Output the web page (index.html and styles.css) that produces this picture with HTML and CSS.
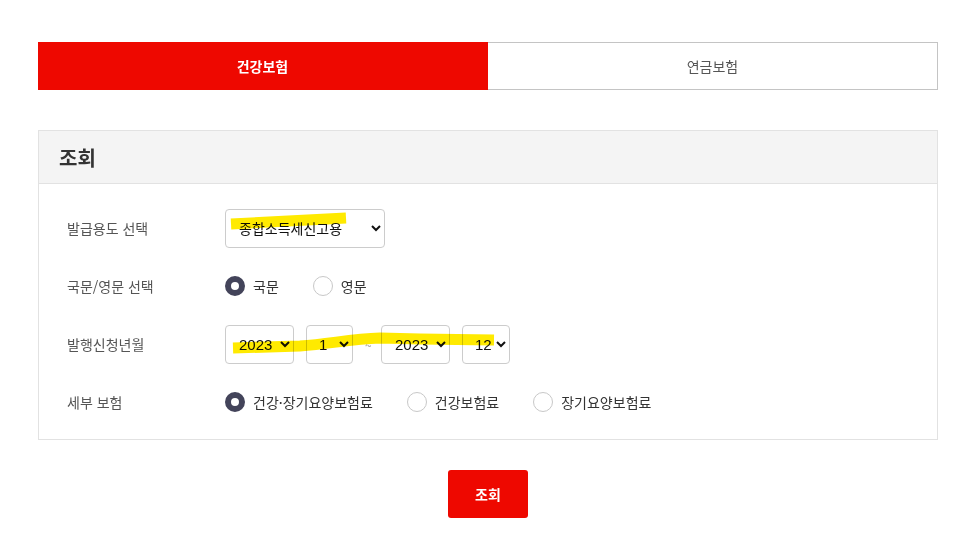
FILE: index.html
```html
<!DOCTYPE html>
<html lang="ko">
<head>
  <meta charset="UTF-8" />
  <meta name="viewport" content="width=device-width, initial-scale=1.0" />
  <title>보험료 납부확인서</title>
  <link rel="stylesheet" href="styles.css">
</head>
<body>

  <div class="wrap">
    <div class="tabs">
      <div class="tab active">건강보험</div>
      <div class="tab">연금보험</div>
    </div>

    <div class="panel">
      <div class="panel-head">조회</div>
      <div class="panel-body">
        <div class="row">
          <div class="label">발급용도 선택</div>
          <select class="sel sel-wide">
            <option>종합소득세신고용</option>
          </select>
        </div>

        <div class="row">
          <div class="label">국문/영문 선택</div>
          <div class="radios">
            <label class="radio"><span class="dot on"></span>국문</label>
            <label class="radio"><span class="dot"></span>영문</label>
          </div>
        </div>

        <div class="row">
          <div class="label">발행신청년월</div>
          <div class="dates">
            <select class="sel sel-year"><option>2023</option></select>
            <select class="sel sel-month"><option>1</option></select>
            <span class="tilde">~</span>
            <select class="sel sel-year"><option>2023</option></select>
            <select class="sel sel-month2"><option>12</option></select>
          </div>
        </div>

        <div class="row">
          <div class="label">세부 보험</div>
          <div class="radios">
            <label class="radio"><span class="dot on"></span>건강·장기요양보험료</label>
            <label class="radio"><span class="dot"></span>건강보험료</label>
            <label class="radio"><span class="dot"></span>장기요양보험료</label>
          </div>
        </div>
      </div>
    </div>

    <div class="actions">
      <button class="btn">조회</button>
    </div>
  </div>

  <!-- highlighter marks drawn over the page -->
  <svg class="marks" width="955" height="536" viewBox="0 0 955 536">
    <path d="M231 224 L346 218" />
    <path d="M233 348 L300 346 C330 344 350 339 380 338 L420 339 L494 340" />
  </svg>

</body>
</html>
```

FILE: styles.css
```css
* { margin: 0; padding: 0; box-sizing: border-box; }
body {
  font-family: "Noto Sans CJK KR", "Noto Sans", sans-serif;
  background: #fff;
  color: #333;
  font-size: 14px;
}
.wrap {
  width: 900px;
  margin-left: 38px;
  padding-top: 42px;
}
.tabs {
  display: flex;
  height: 48px;
}
.tab {
  flex: 1;
  display: flex;
  align-items: center;
  justify-content: center;
  border: 1px solid #c4c4c4;
  border-left: none;
  color: #555;
  font-size: 14px;
}
.tab.active {
  background: #ee0800;
  border-color: #ee0800;
  color: #fff;
  font-weight: bold;
}
.panel {
  margin-top: 40px;
  border: 1px solid #e2e2e2;
}
.panel-head {
  background: #f4f4f4;
  border-bottom: 1px solid #e2e2e2;
  height: 53px;
  padding-left: 20px;
  display: flex;
  align-items: center;
  font-size: 20px;
  font-weight: bold;
  color: #333;
}
.panel-body {
  padding: 24px 28px 17px;
  display: flex;
  flex-direction: column;
  gap: 18px;
}
.row {
  display: flex;
  align-items: center;
  height: 40px;
}
.label {
  width: 158px;
  color: #555;
  font-size: 14px;
}
.sel {
  height: 39px;
  border: 1px solid #ccc;
  border-radius: 4px;
  background: #fff;
  font-family: "Liberation Sans", "Noto Sans CJK KR", sans-serif;
  font-size: 15px;
  color: #111;
  padding: 0 2px 0 9px;
}
.sel-wide {
  width: 160px;
  font-family: "Noto Sans CJK KR", sans-serif;
  font-size: 14px;
}
.sel-year { width: 69px; }
.sel-month { width: 47px; padding-left: 8px; }
.sel-month2 { width: 48px; padding-left: 8px; }
.dates {
  display: flex;
  align-items: center;
  gap: 12px;
}
.tilde {
  color: #999;
  width: 4px;
  font-size: 12px;
}
.radios {
  display: flex;
  align-items: center;
  gap: 34px;
}
.radio {
  display: flex;
  align-items: center;
  gap: 8px;
  color: #333;
  font-size: 14px;
}
.dot {
  width: 20px;
  height: 20px;
  border-radius: 50%;
  border: 1px solid #c8c8c8;
  background: #fff;
}
.dot.on {
  border: 6px solid #43445a;
}
.actions {
  display: flex;
  justify-content: center;
  padding-top: 30px;
}
.btn {
  width: 80px;
  height: 48px;
  border: none;
  border-radius: 3px;
  background: #ee0800;
  color: #fff;
  font-family: inherit;
  font-size: 14px;
  font-weight: bold;
}
.marks {
  position: absolute;
  left: 0;
  top: 0;
  pointer-events: none;
  mix-blend-mode: multiply;
}
.marks path {
  fill: none;
  stroke: #ffea00;
  stroke-width: 11;
}
```
